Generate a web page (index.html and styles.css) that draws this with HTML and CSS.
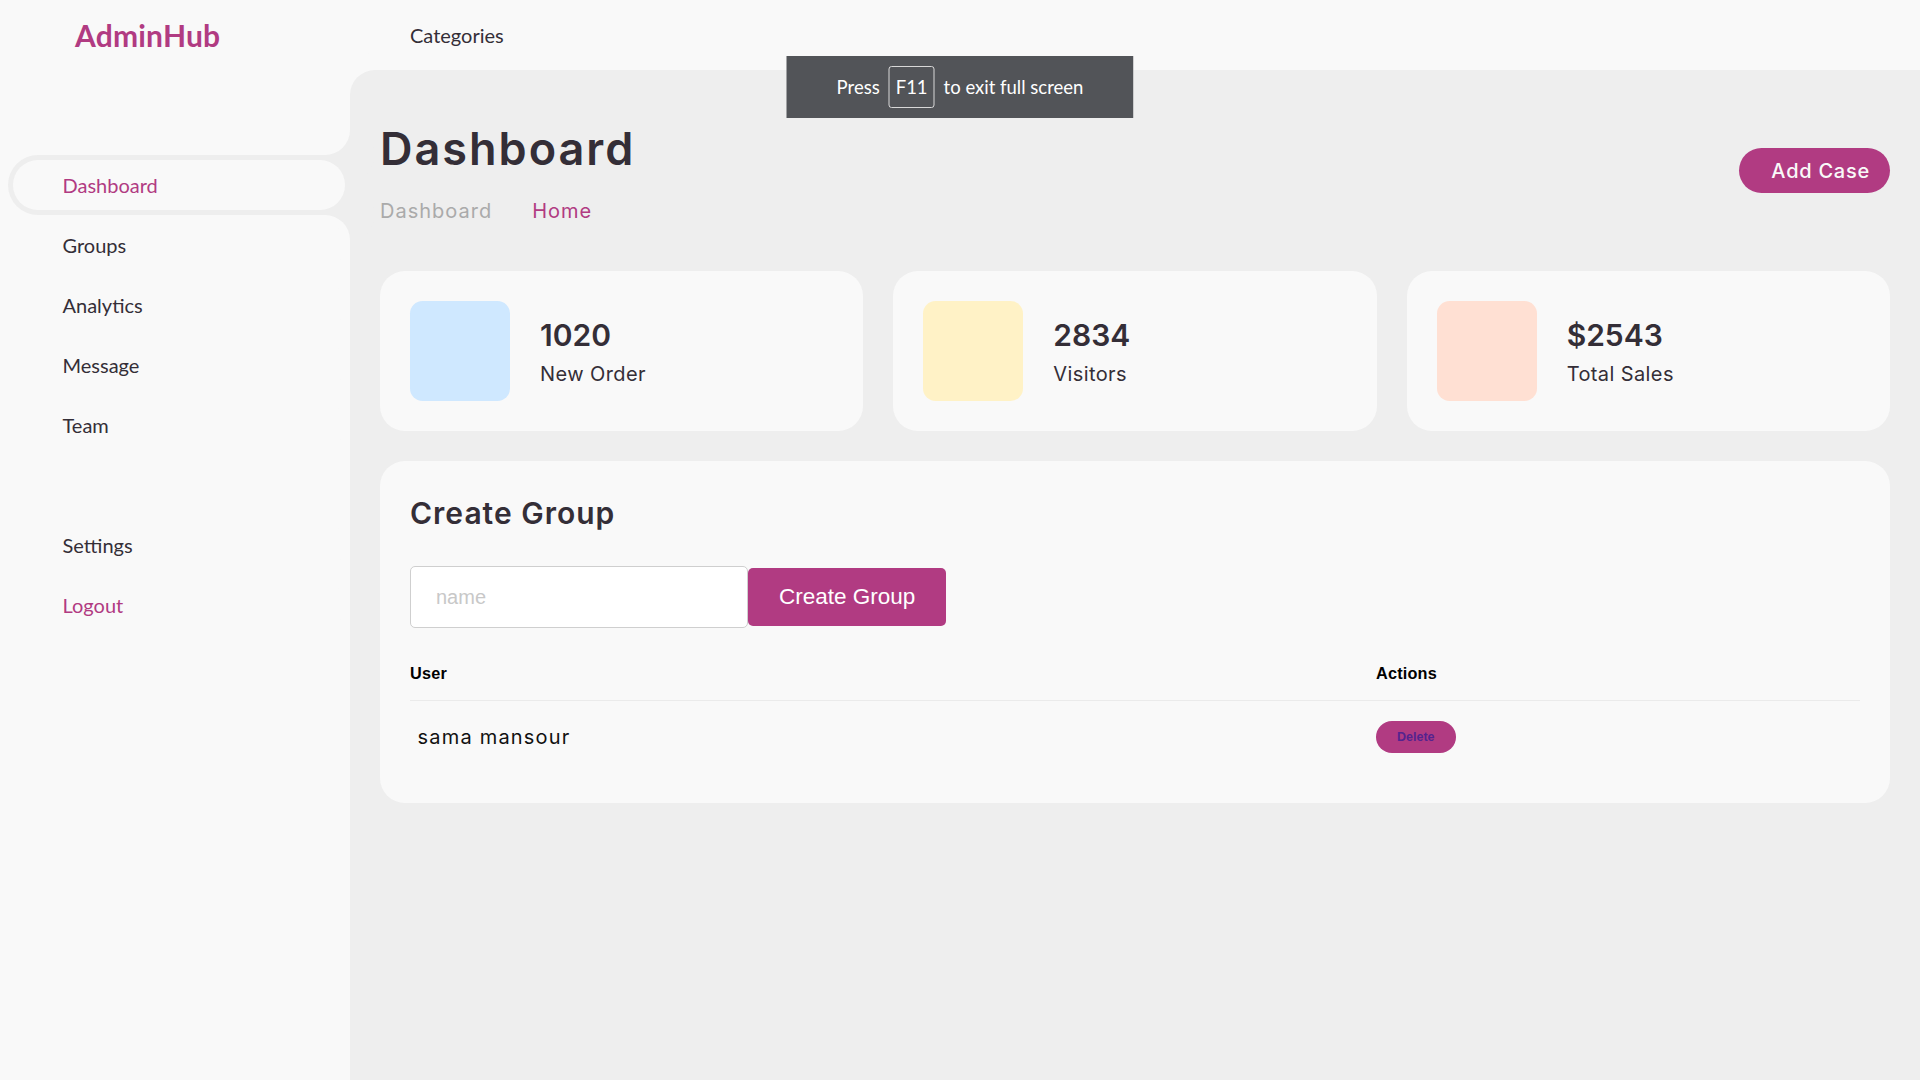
FILE: index.html
```html
<!DOCTYPE html>
<html lang="en">
<head>
<meta charset="utf-8">
<title>AdminHub</title>
<link rel="stylesheet" href="styles.css">
</head>
<body>
<section class="sidebar">
  <a href="#" class="brand"><span class="brand-icon"></span><span class="brand-text">AdminHub</span></a>
  <ul class="side-menu top">
    <li class="active"><a href="#">Dashboard</a></li>
    <li><a href="#">Groups</a></li>
    <li><a href="#">Analytics</a></li>
    <li><a href="#">Message</a></li>
    <li><a href="#">Team</a></li>
  </ul>
  <ul class="side-menu">
    <li><a href="#">Settings</a></li>
    <li><a href="#" class="logout">Logout</a></li>
  </ul>
</section>

<section class="content">
  <nav class="topnav">
    <a href="#" class="nav-link">Categories</a>
  </nav>
  <main class="main">
    <div class="head-title">
      <div class="left">
        <h1>Dashboard</h1>
        <ul class="breadcrumb">
          <li><a href="#">Dashboard</a></li>
          <li><a href="#" class="active">Home</a></li>
        </ul>
      </div>
      <a href="#" class="btn-add"><span class="text">Add Case</span></a>
    </div>

    <ul class="box-info">
      <li>
        <span class="tile tile-blue"></span>
        <span class="text"><h3>1020</h3><p>New Order</p></span>
      </li>
      <li>
        <span class="tile tile-yellow"></span>
        <span class="text"><h3>2834</h3><p>Visitors</p></span>
      </li>
      <li>
        <span class="tile tile-orange"></span>
        <span class="text"><h3>$2543</h3><p>Total Sales</p></span>
      </li>
    </ul>

    <div class="table-data">
      <div class="order">
        <div class="head"><h3>Create Group</h3></div>
        <form class="group-form">
          <input type="text" class="group-input" placeholder="name">
          <button type="button" class="group-btn">Create Group</button>
        </form>
        <table class="group-table">
          <colgroup><col class="col-user"><col></colgroup>
          <thead>
            <tr><th>User</th><th>Actions</th></tr>
          </thead>
          <tbody>
            <tr>
              <td class="user-cell">sama mansour</td>
              <td><button type="button" class="btn-delete">Delete</button></td>
            </tr>
          </tbody>
        </table>
      </div>
    </div>
  </main>
</section>

<div class="fs-toast"><span>Press</span><kbd class="fs-key">F11</kbd><span>to exit full screen</span></div>
</body>
</html>
```

FILE: styles.css
```css
* {
  margin: 0;
  padding: 0;
  box-sizing: border-box;
}

a {
  text-decoration: none;
}

li {
  list-style: none;
}

html, body {
  height: 100%;
}

body {
  background: #eeeeee;
  display: flex;
  min-height: 1080px;
  overflow: hidden;
}

/* ---------- Sidebar ---------- */
.sidebar {
  width: 350px;
  flex: 0 0 350px;
  background: #f9f9f9;
  font-family: "Lato", "Liberation Sans", sans-serif;
  position: relative;
  z-index: 2;
}

.brand {
  display: flex;
  align-items: center;
  height: 70px;
  padding-bottom: 25px;
  box-sizing: content-box;
  font-size: 30px;
  font-weight: 700;
  color: #b13b82;
  letter-spacing: 0.2px;
}

.brand-icon {
  width: 75px;
  flex: 0 0 75px;
}

.side-menu {
  width: 100%;
  margin-top: 60px;
}

.side-menu li {
  height: 60px;
  margin-left: 7.5px;
  padding: 5px;
  border-radius: 60px 0 0 60px;
  background: transparent;
}

.side-menu li.active {
  background: #eeeeee;
  position: relative;
}

.side-menu li.active::before {
  content: '';
  position: absolute;
  width: 50px;
  height: 50px;
  border-radius: 50%;
  top: -50px;
  right: 0;
  box-shadow: 25px 25px 0 #eeeeee;
  z-index: -1;
}

.side-menu li.active::after {
  content: '';
  position: absolute;
  width: 50px;
  height: 50px;
  border-radius: 50%;
  bottom: -50px;
  right: 0;
  box-shadow: 25px -25px 0 #eeeeee;
  z-index: -1;
}

.side-menu li a {
  width: 100%;
  height: 100%;
  display: flex;
  align-items: center;
  padding-left: 50px;
  background: #f9f9f9;
  border-radius: 60px;
  font-size: 20px;
  color: #342e37;
  white-space: nowrap;
}

.side-menu.top li.active a {
  color: #b13b82;
}

.side-menu li a.logout {
  color: #b13b82;
}

/* ---------- Content ---------- */
.content {
  flex: 1;
  min-width: 0;
  display: flex;
  flex-direction: column;
}

.topnav {
  height: 70px;
  flex: 0 0 70px;
  background: #f9f9f9;
  display: flex;
  align-items: center;
  padding: 0 30px 0 60px;
  font-family: "Lato", "Liberation Sans", sans-serif;
  position: relative;
}

.topnav::before {
  content: '';
  position: absolute;
  width: 50px;
  height: 50px;
  bottom: -50px;
  left: 0;
  border-radius: 50%;
  box-shadow: -25px -25px 0 #f9f9f9;
}

.nav-link {
  font-size: 20px;
  color: #342e37;
}

.main {
  padding: 45px 30px;
  font-family: "Inter", "Open Sans", sans-serif;
}

.head-title {
  display: flex;
  align-items: center;
  justify-content: space-between;
  gap: 20px;
}

.head-title h1 {
  font-size: 45px;
  line-height: 67.5px;
  font-weight: 600;
  color: #342e37;
  margin-bottom: 13.5px;
  letter-spacing: 2px;
}

.breadcrumb {
  display: flex;
  align-items: center;
  gap: 40px;
}

.breadcrumb li a {
  font-size: 20px;
  line-height: 30px;
  color: #aaaaaa;
  letter-spacing: 1px;
}

.breadcrumb li a.active {
  color: #b13b82;
}

.btn-add {
  height: 45px;
  padding: 0 20px 0 32.5px;
  border-radius: 45px;
  background: #b13b82;
  color: #f9f9f9;
  display: flex;
  align-items: center;
  font-size: 20px;
  font-weight: 500;
  letter-spacing: 0.75px;
}

/* ---------- Boxes ---------- */
.box-info {
  display: grid;
  grid-template-columns: repeat(3, 1fr);
  gap: 30px;
  margin-top: 45px;
}

.box-info li {
  padding: 30px;
  background: #f9f9f9;
  border-radius: 25px;
  display: flex;
  align-items: center;
  gap: 30px;
}

.tile {
  width: 100px;
  height: 100px;
  border-radius: 12.5px;
  flex: 0 0 100px;
}

.tile-blue { background: #cfe8ff; }
.tile-yellow { background: #fff2c6; }
.tile-orange { background: #ffe0d3; }

.box-info .text h3 {
  font-size: 30px;
  line-height: 45px;
  font-weight: 600;
  color: #342e37;
}

.box-info .text p {
  font-size: 20px;
  line-height: 30px;
  color: #342e37;
  letter-spacing: 0.4px;
  margin-top: 1px;
}

/* ---------- Table card ---------- */
.table-data {
  margin-top: 30px;
  color: #342e37;
}

.order {
  border-radius: 25px;
  background: #f9f9f9;
  padding: 30px;
}

.head {
  display: flex;
  align-items: center;
  margin-bottom: 30px;
}

.head h3 {
  font-size: 30px;
  line-height: 45px;
  font-weight: 600;
  letter-spacing: 1px;
}

.group-form {
  display: flex;
  align-items: center;
  margin-bottom: 33px;
}

.group-input {
  width: 338px;
  height: 62px;
  padding: 0 25px;
  background: #ffffff;
  border: 1px solid #cfcfcf;
  border-radius: 5px;
  font-family: "Liberation Sans", Arial, sans-serif;
  font-size: 20px;
  color: #333;
  outline: none;
}

.group-input::placeholder {
  color: #c8c8c8;
}

.group-btn {
  height: 58px;
  padding: 0 31px;
  background: #b13b82;
  border: 0;
  border-radius: 5px;
  color: #ffffff;
  font-family: "Liberation Sans", Arial, sans-serif;
  font-size: 22.5px;
}

.group-table {
  width: 100%;
  border-collapse: collapse;
  table-layout: fixed;
}

.col-user {
  width: 966px;
}

.group-table th {
  padding-bottom: 15px;
  font-family: "Liberation Sans", Arial, sans-serif;
  font-size: 16.25px;
  line-height: 24px;
  font-weight: 700;
  text-align: left;
  color: #000;
  border-bottom: 1.5px solid #ebebeb;
  letter-spacing: 0.2px;
}

.group-table td {
  padding: 20px 0;
  vertical-align: middle;
}

.user-cell {
  padding-left: 7.5px !important;
  font-size: 20px;
  line-height: 30px;
  color: #111;
  letter-spacing: 1.2px;
}

.btn-delete {
  height: 32px;
  padding: 0 21px;
  border: 0;
  border-radius: 25px;
  background: #b13b82;
  color: #54238f;
  font-family: "Liberation Sans", Arial, sans-serif;
  font-size: 12.5px;
  font-weight: 700;
}

/* ---------- Full screen notice ---------- */
.fs-toast {
  position: fixed;
  top: 56px;
  left: 50%;
  transform: translateX(-50%);
  width: 347px;
  height: 62px;
  background: #525458;
  color: #ffffff;
  display: flex;
  align-items: center;
  justify-content: center;
  gap: 9px;
  font-family: "Lato", "Open Sans", sans-serif;
  font-size: 18.5px;
  z-index: 10;
}

.fs-key {
  font-family: "Lato", "Open Sans", sans-serif;
  height: 42px;
  line-height: 40px;
  padding: 0 6px;
  border: 1px solid #d8d8d8;
  border-radius: 3px;
  font-size: 18.5px;
}
```
